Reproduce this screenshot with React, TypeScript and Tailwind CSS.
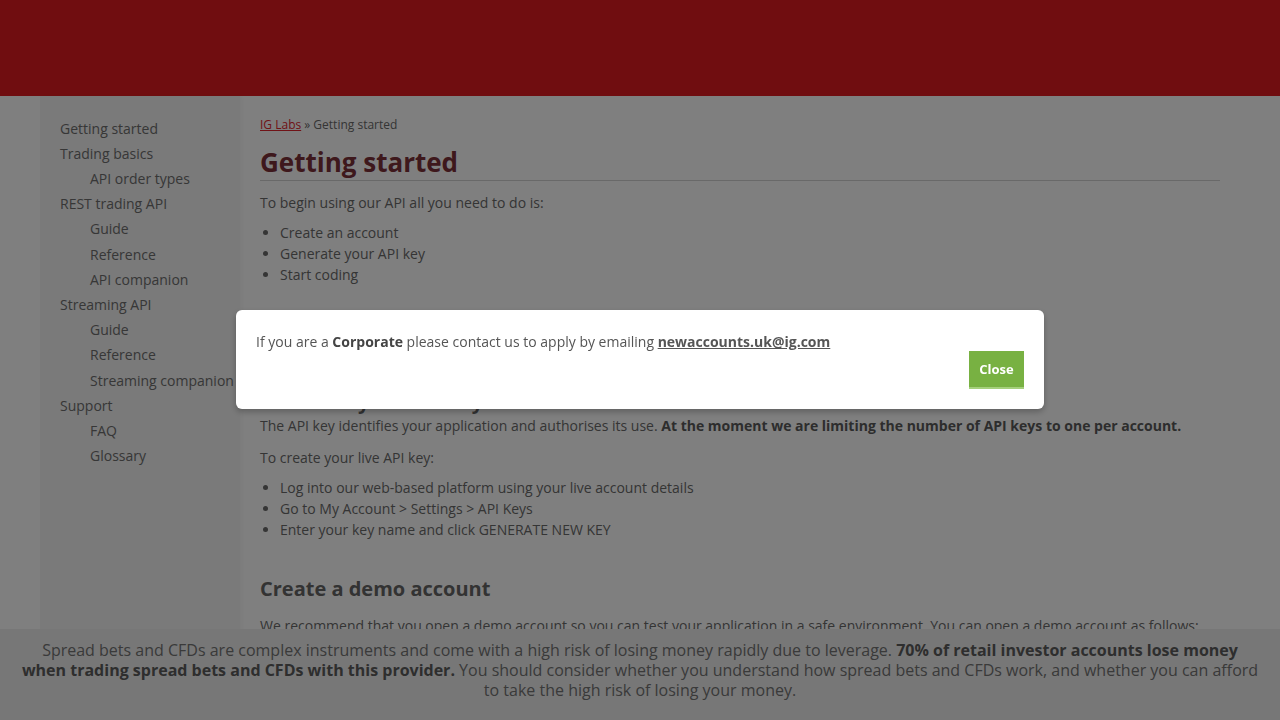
import React from 'react';

type NavItem = { label: string; children?: string[] };

const nav: NavItem[] = [
    { label: 'Getting started' },
    { label: 'Trading basics', children: ['API order types'] },
    { label: 'REST trading API', children: ['Guide', 'Reference', 'API companion'] },
    { label: 'Streaming API', children: ['Guide', 'Reference', 'Streaming companion'] },
    { label: 'Support', children: ['FAQ', 'Glossary'] },
];

const Sidebar = () => (
    <aside className="w-[200px] shrink-0 bg-[#f4f4f4] pt-[19.5px] pl-5 shadow-[2px_0_4px_rgba(0,0,0,0.04)]">
        <ul className="text-sm leading-[25.2px] text-[#6e6e6e]">
            {nav.map((item) => (
                <li key={item.label}>
                    <a href="#" className="whitespace-nowrap">{item.label}</a>
                    {item.children && (
                        <ul className="pl-[30px]">
                            {item.children.map((c) => (
                                <li key={c}>
                                    <a href="#" className="whitespace-nowrap">{c}</a>
                                </li>
                            ))}
                        </ul>
                    )}
                </li>
            ))}
        </ul>
    </aside>
);

const Bullets = ({ items, className = '' }: { items: string[]; className?: string }) => (
    <ul className={`list-disc pl-5 leading-[21px] ${className}`}>
        {items.map((i) => (
            <li key={i}>{i}</li>
        ))}
    </ul>
);

const Content = () => (
    <main className="flex-1 px-5 pb-10 text-sm text-[#6a6a6a]">
        <div className="pt-5 text-xs leading-[18px]">
            <a href="#" className="text-[#e0262e] underline">IG Labs</a> » Getting started
        </div>
        <h1 className="mt-3 border-b border-[#d2d2d2] pb-[2px] text-[26px] font-bold leading-[32px] text-[#7c3038]">
            Getting started
        </h1>
        <p className="mt-[10.5px] leading-[21px]">To begin using our API all you need to do is:</p>
        <Bullets className="mt-[9.5px]" items={['Create an account', 'Generate your API key', 'Start coding']} />

        <h2 className="mt-[36px] text-xl font-bold leading-6 text-[#666]">Create an account</h2>
        <p className="mt-2 leading-[21px]">Open a live account with IG to start trading through the API.</p>

        <h3 className="mt-[16px] text-xl font-bold leading-6 text-[#666]">Generate your API key</h3>
        <p className="mt-[0.5px] leading-[21px]">
            The API key identifies your application and authorises its use.{' '}
            <strong className="text-[#5a5a5a]">
                At the moment we are limiting the number of API keys to one per account.
            </strong>
        </p>
        <p className="mt-[11px] leading-[21px]">To create your live API key:</p>
        <Bullets
            className="mt-[9.5px]"
            items={[
                'Log into our web-based platform using your live account details',
                'Go to My Account > Settings > API Keys',
                'Enter your key name and click GENERATE NEW KEY',
            ]}
        />

        <h2 className="mt-[37px] text-xl font-bold leading-6 text-[#666]">Create a demo account</h2>
        <p className="mt-[14px] leading-[21px]">
            We recommend that you open a demo account so you can test your application in a safe environment. You can
            open a demo account as follows:
        </p>
    </main>
);

const RiskWarning = () => (
    <div className="fixed inset-x-0 bottom-0 h-[91px] bg-[#efefef] px-5 pt-[11px] text-center text-base leading-5 text-[#747474]">
        Spread bets and CFDs are complex instruments and come with a high risk of losing money rapidly due to leverage.{' '}
        <strong className="text-[#5c5c5c]">
            70% of retail investor accounts lose money when trading spread bets and CFDs with this provider.
        </strong>{' '}
        You should consider whether you understand how spread bets and CFDs work, and whether you can afford to take the
        high risk of losing your money.
    </div>
);

const CorporateModal = () => (
    <>
        <div className="fixed inset-0 bg-black/50" />
        <div className="fixed left-1/2 top-[310px] w-[808px] -translate-x-1/2 rounded-md bg-white px-5 pt-[21px] pb-5 text-sm text-[#555] shadow-[0_3px_6px_rgba(0,0,0,0.25)]">
            <p className="leading-[22px]">
                If you are a <strong className="text-[#444]">Corporate</strong> please contact us to apply by emailing{' '}
                <a href="#" className="font-bold text-[#555] underline">newaccounts.uk@ig.com</a>
            </p>
            <div className="-mt-[2px] flex justify-end">
                <button className="h-[38px] w-[55px] border-b-2 border-[#a5d07c] bg-[#78b142] text-[13px] font-bold text-white">
                    Close
                </button>
            </div>
        </div>
    </>
);

export default function App() {
    return (
        <div className="min-h-screen bg-white font-['Open_Sans',sans-serif]">
            <header className="h-24 bg-[#e11b20]" />
            <div className="mx-auto flex min-h-[624px] w-[1200px]">
                <Sidebar />
                <Content />
            </div>
            <RiskWarning />
            <CorporateModal />
        </div>
    );
}
